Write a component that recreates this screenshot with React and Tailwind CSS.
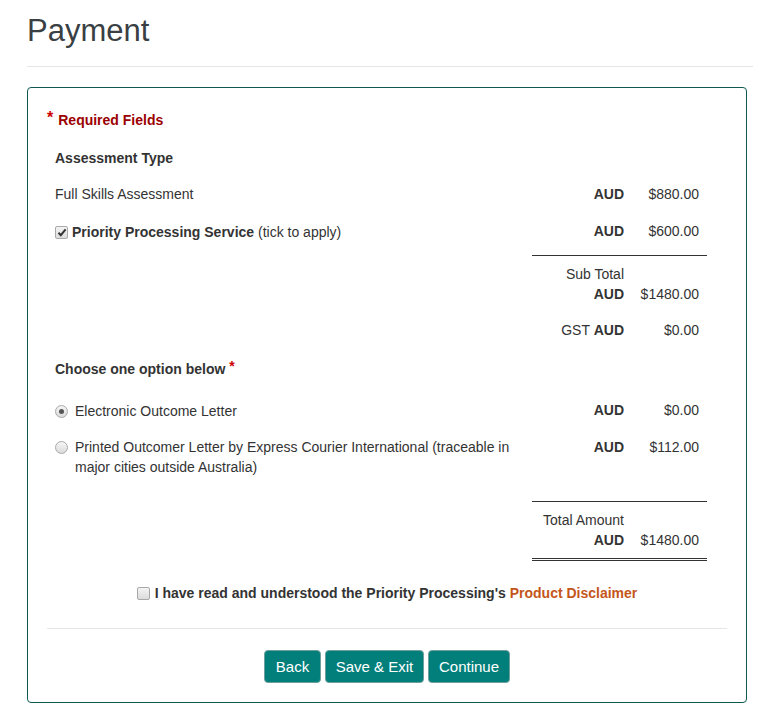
import React from "react";

function Checkbox({ checked }) {
  return (
    <span className="inline-flex h-[13px] w-[13px] shrink-0 items-center justify-center rounded-[2px] border border-[#a9a9a9] bg-gradient-to-b from-[#f4f4f4] to-[#dcdcdc]">
      {checked && (
        <svg width="10" height="9" viewBox="0 0 10 9">
          <path d="M1.5 4.8 L3.8 7.2 L8.6 1.4" fill="none" stroke="#333" strokeWidth="2" />
        </svg>
      )}
    </span>
  );
}

function Radio({ checked }) {
  return (
    <span className="inline-flex h-[13px] w-[13px] shrink-0 items-center justify-center rounded-full border border-[#a9a9a9] bg-gradient-to-b from-[#f6f6f6] to-[#dadada]">
      {checked && <span className="h-[5px] w-[5px] rounded-full bg-[#555]" />}
    </span>
  );
}

function Amount({ label, value }) {
  return (
    <>
      <div className="text-right">{label}</div>
      <div className="pr-[8px] text-right">{value}</div>
    </>
  );
}

export default function App() {
  return (
    <div className="min-h-[703px] bg-white text-[14px] leading-[20px] text-[#333]" style={{ fontFamily: '"Liberation Sans", Arial, sans-serif' }}>
      <div className="px-[27px]">
        <h1 className="mt-[14px] h-[33px] text-[31px] leading-[33px] text-[#3a3f44]">Payment</h1>
        <div className="mt-[19px] border-t border-[#e5e5e5]" />

        <div className="mt-[20px] w-[720px] rounded-[4px] border border-[#0e5a52] px-[19px] pt-[22px] pb-[19px]">
          <div className="h-[20px] font-bold text-[#9b0000]">
            <span className="relative -top-[2px] mr-[5px] text-[16px] leading-[20px] text-[#c00]">*</span>Required Fields
          </div>

          <div className="pl-[8px] pr-[12px]">
            <div className="mt-[18px] font-bold">Assessment Type</div>

            <div className="mt-[16px] grid grid-cols-[477px_92px_83px]">
              <div>Full Skills Assessment</div>
              <Amount label={<b>AUD</b>} value="$880.00" />
            </div>

            <div className="mt-[17px] grid grid-cols-[477px_92px_83px]">
              <div className="relative top-[1px] flex items-center gap-[4px]">
                <Checkbox checked />
                <span>
                  <b>Priority Processing Service</b> (tick to apply)
                </span>
              </div>
              <Amount label={<b>AUD</b>} value="$600.00" />
            </div>

            <div className="grid grid-cols-[477px_175px]">
              <div />
              <div>
                <div className="mt-[14px] border-t border-[#333]" />
                <div className="mt-[8px] grid grid-cols-[92px_83px]">
                  <div className="text-right">Sub Total</div>
                  <div />
                  <Amount label={<b>AUD</b>} value="$1480.00" />
                </div>
                <div className="mt-[16px] grid grid-cols-[92px_83px]">
                  <Amount label={<>GST <b>AUD</b></>} value="$0.00" />
                </div>
              </div>
            </div>

            <div className="mt-[19px] h-[20px] font-bold">
              Choose one option below <span className="relative -top-[3px] text-[#c00]">*</span>
            </div>

            <div className="mt-[21px] grid grid-cols-[477px_92px_83px]">
              <div className="relative top-[1px] flex items-center gap-[7px]">
                <Radio checked />
                <span>Electronic Outcome Letter</span>
              </div>
              <Amount label={<b>AUD</b>} value="$0.00" />
            </div>

            <div className="mt-[17px] grid grid-cols-[477px_92px_83px]">
              <div className="flex items-start gap-[7px] pr-[10px]">
                <span className="mt-[4px] flex">
                  <Radio />
                </span>
                <span>
                  Printed Outcomer Letter by Express Courier International (traceable in major cities outside Australia)
                </span>
              </div>
              <Amount label={<b>AUD</b>} value="$112.00" />
            </div>

            <div className="grid grid-cols-[477px_175px]">
              <div />
              <div>
                <div className="mt-[24px] border-t border-[#333]" />
                <div className="mt-[8px] grid grid-cols-[92px_83px] border-b-[3px] border-double border-[#333] pb-[8px]">
                  <div className="text-right whitespace-nowrap">Total Amount</div>
                  <div />
                  <Amount label={<b>AUD</b>} value="$1480.00" />
                </div>
              </div>
            </div>
          </div>

          <div className="mt-[22px] flex h-[20px] items-center justify-center gap-[5px] font-bold">
            <Checkbox />
            <span>
              I have read and understood the Priority Processing's{" "}
              <span className="text-[#c4561b]">Product Disclaimer</span>
            </span>
          </div>

          <div className="mt-[25px] border-t border-[#e5e5e5]" />

          <div className="mt-[21px] flex justify-center gap-[4px]">
            <button className="h-[33px] w-[57px] rounded-[4px] border border-[#6f9f9c] bg-[#037f7b] text-[15px] text-white">Back</button>
            <button className="h-[33px] w-[99px] rounded-[4px] border border-[#6f9f9c] bg-[#037f7b] text-[15px] text-white">Save &amp; Exit</button>
            <button className="h-[33px] w-[82px] rounded-[4px] border border-[#6f9f9c] bg-[#037f7b] text-[15px] text-white">Continue</button>
          </div>
        </div>
      </div>
    </div>
  );
}
